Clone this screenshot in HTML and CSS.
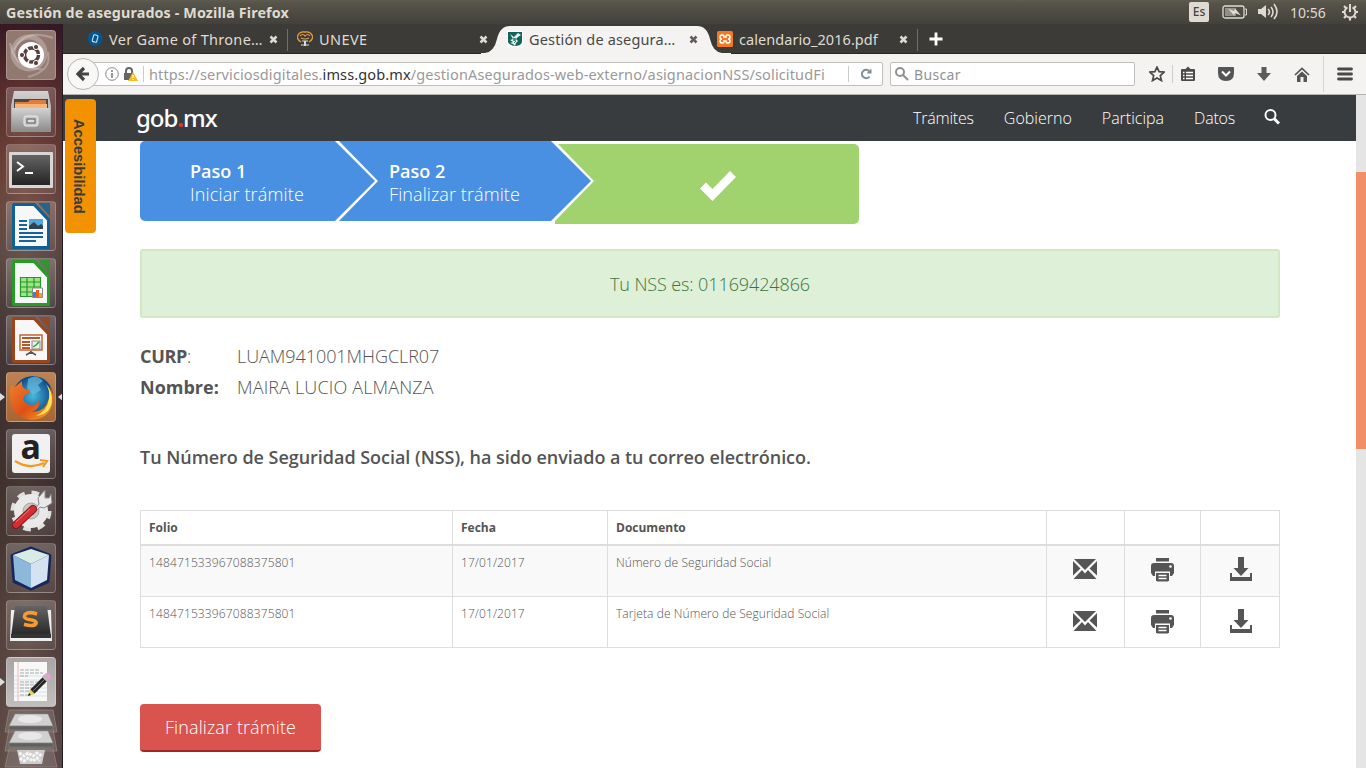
FILE: index.html
```html
<!DOCTYPE html>
<html lang="es">
<head>
<meta charset="utf-8">
<title>Gestión de asegurados</title>
<link rel="stylesheet" href="styles.css">
</head>
<body>
<svg class="defs" width="0" height="0">
  <defs>
    <symbol id="close" viewBox="0 0 9 9"><path d="M1.5 1.5l6 6M7.500 1.500l-6 6" stroke="currentColor" stroke-width="2.500"/></symbol>
    <symbol id="mail" viewBox="0 0 24 20"><g fill="#555"><path d="M1 0h22L12 11z"/><path d="M0 2l7.500 7.500L0 16.500zM24 2l-7.500 7.500 7.500 7zM9 11l3 3.500 3-3.500 8.500 9H.5z"/></g></symbol>
    <symbol id="print" viewBox="0 0 23 25"><path fill="#555" d="M5 1h13v3H5zM3 6h17q3 0 3 3v7l-2 3h-2v-4H4v4H2l-2-3V9q0-3 3-3zM5 16h13v8H5z"/><path fill="#aaa" d="M5 4h13v1H5zM4 14h15v1H4zM6 24h11v1H6z"/><circle cx="19.500" cy="9.500" r="1.300" fill="#fff"/><path d="M7.500 18.500h8M7.500 21.500h8" stroke="#fff" stroke-width="1.400"/></symbol>
    <symbol id="down" viewBox="0 0 22 24"><path fill="#555" d="M8 0h6v11h4.500L11 19 3.500 11H8zM0 16h2v4h18v-4h2v8H0z"/></symbol>
    <linearGradient id="steel" x2="0" y2="1"><stop stop-color="#d2d2d2"/><stop offset="1" stop-color="#8d8d8d"/></linearGradient>
    <linearGradient id="dark" x2="0" y2="1"><stop stop-color="#646464"/><stop offset="1" stop-color="#242424"/></linearGradient>
    <linearGradient id="fox" x2="1" y2="1"><stop stop-color="#ed8130"/><stop offset=".55" stop-color="#df5015"/><stop offset="1" stop-color="#f7a72d"/></linearGradient>
    <radialGradient id="globe"><stop stop-color="#48b9df"/><stop offset="1" stop-color="#0b4785"/></radialGradient>
    <symbol id="page" viewBox="0 0 50 50"><path d="M8 2h21l15 16v29q0 1-1 1H8q-2 0-2-2V4q0-2 2-2z" fill="currentColor"/><path d="M9 5h18.500L41 19.500V45H9z" fill="#f7f7f7"/><path d="M32 2h12v13z" fill="currentColor" opacity=".8"/></symbol>
  </defs>
</svg>

<header class="panel">
  <span class="panel-title">Gestión de asegurados - Mozilla Firefox</span>
  <span class="keyboard">Es</span>
  <svg class="battery" width="25" height="14" viewBox="0 0 25 14"><rect x="1" y="1" width="21" height="12" rx="2" fill="none" stroke="#dfdbd2" stroke-width="1.300"/><path d="M23 4h1.500v6H23" fill="none" stroke="#dfdbd2"/><rect x="3" y="3" width="11" height="8" fill="#918f88"/><path d="M6 3.500l6 2.500 1-2.500 6 7-6-2.500-1 2.500z" fill="#dfdbd2"/></svg>
  <svg class="volume" width="22" height="18" viewBox="0 0 22 18"><path d="M1 6h3l5-4v13l-5-4H1z" fill="#dfdbd2"/><path d="M11 6q3 3 0 6M14 4q4 5 0 10M17 1q6 8 0 15" fill="none" stroke="#dfdbd2" stroke-width="1.600"/></svg>
  <span class="clock">10:56</span>
  <svg class="session" width="18" height="18" viewBox="0 0 18 18" fill="none" stroke="#dfdbd2"><path d="M6.500 4.300a5.400 5.400 0 1 0 5 0" stroke-width="1.900"/><path d="M9 1v8" stroke-width="2"/><path d="M3 3l2 2M15 3l-2 2M1 9h2M15 9h2M3 15l2-2M15 15l-2-2M9 15v2.500" stroke-width="2.200"/></svg>
</header>

<div class="desktop">
  <nav class="launcher">
    <div class="tile dash"><svg viewBox="0 0 50 50"><g fill="none" stroke="#fff" stroke-opacity=".25"><circle cx="23" cy="23" r="16" stroke-width="5"/><path d="M8 20Q18-2 47 8M42 22q4 19-20 25M4 13q5 28 35 26" stroke-width="2"/></g><circle cx="25" cy="25" r="13" fill="#fff"/><circle cx="25.500" cy="25" r="7" fill="none" stroke="#56433f" stroke-width="3.500" stroke-dasharray="13.200 1.500"/><g fill="#56433f" stroke="#fff"><circle cx="16" cy="25" r="2.600"/><circle cx="30" cy="17" r="2.600"/><circle cx="30" cy="33" r="2.600"/></g></svg></div>
    <div class="tile"><svg viewBox="0 0 50 50"><path d="M8 4h34l3 15v26H5V19z" fill="url(#steel)"/><path d="M8 12h34v9H8z" fill="#4c4743"/><path d="M9 15h13l2-2h16v8H9z" fill="#e37b3b"/><path d="M9 17h32v5H9z" fill="#f7b57a"/><path d="M6 21h38v23H6z" fill="url(#steel)"/><rect x="18" y="29" width="14" height="10" rx="2" fill="#c8c8c8" stroke="#ededed"/><rect x="21" y="32" width="8" height="4" fill="#ddd" stroke="#555"/></svg></div>
    <div class="tile"><svg viewBox="0 0 50 50"><rect x="3" y="8" width="44" height="36" rx="1" fill="#d7d7d5"/><rect x="6" y="11" width="38" height="30" fill="url(#dark)"/><path d="M11 18l6 4.500-6 4.500M19 29h8" fill="none" stroke="#fff" stroke-width="2"/></svg></div>
    <div class="tile blue"><svg viewBox="0 0 50 50"><use href="#page"/><rect x="23" y="18" width="14" height="10" fill="#51a8db"/><path d="M23 28v-3l5-4 4 4 3-2 2 2v3z" fill="#30424b"/><path d="M13 20h8M13 24h8M13 28h8M13 32h24M13 36h24M13 40h17" stroke="#15649b" stroke-width="1.800"/></svg></div>
    <div class="tile green"><svg viewBox="0 0 50 50"><use href="#page"/><rect x="14" y="19" width="21" height="20" fill="#9ee685"/><path d="M14 19.500h21M14 24h21M14 29h21M14 34h21M14 38.500h21M14.500 19v20M21 19v20M28 19v20M34.500 19v20" stroke="#25972b" stroke-width="1.200"/><path d="M26.500 30h10v9.500h-10z" fill="#fff" stroke="#888"/><path d="M27 34h3v5h-3z" fill="#3885c3"/><path d="M30 32h3v7h-3z" fill="#eb5d23"/><path d="M33 35h3v4h-3z" fill="#e7a82b"/></svg></div>
    <div class="tile brown"><svg viewBox="0 0 50 50"><use href="#page"/><rect x="14" y="20" width="22" height="15" fill="#fff" stroke="#c56235" stroke-width="1.500"/><path d="M16 23h18M16 27h8M16 30h8M16 33h8" stroke="#b95527" stroke-width="2"/><rect x="26" y="26" width="8" height="8" fill="#eee" stroke="#888"/><path d="M27 32l3-2 3-3" stroke="#29a22a" fill="none" stroke-width="1.500"/><path d="M25 36v3M25 37l-5 3M25 37l5 3" stroke="#555" stroke-width="1.500"/></svg></div>
    <div class="tile running firefox"><svg viewBox="0 0 50 50"><circle cx="27" cy="24" r="20" fill="url(#globe)"/><path d="M22 7q8-6 15 2l-5 4 3 5-8 5-6-7z" fill="#69bee0" opacity=".7"/><path d="M5 13l4 2 7-6q-1 5 3 8l5 1q0 3-5 5l-2 4q2 6 9 6 6 0 7-5 2 8-7 12 12 0 16-11 4-6 2-15 4 8 3 14-2 19-22 20Q5 44 4 26q-1-7 1-13z" fill="url(#fox)"/><path d="M40 12q4 6 3 14-1 12-13 18Q47 42 46 25q-1-8-6-13z" fill="#ffe34b"/></svg></div>
    <div class="tile"><svg viewBox="0 0 50 50"><rect x="6" y="5" width="38" height="39" rx="3" fill="#f1f1f1"/><text x="14.500" y="30" class="amazon">a</text><path d="M9 32q14 9 29 2M34 31l7 1-4 6" fill="none" stroke="#f49a24" stroke-width="2.200"/></svg></div>
    <div class="tile"><svg viewBox="0 0 50 50"><circle cx="25" cy="25" r="17" fill="none" stroke="#e0e0e0" stroke-width="7" stroke-dasharray="7 6.350"/><circle cx="25" cy="25" r="12.500" fill="none" stroke="#e9e9e9" stroke-width="9"/><circle cx="25" cy="25" r="8" fill="#c6c6c6" stroke="#aaa"/><path d="M25 28L33 18l-1-6 7-8 0 8 4 0 2-4 1 9-8 5-4-1-7 8z" fill="#e9e9e9" stroke="#888"/><path d="M10 39L27 23" stroke="#8e171b" stroke-width="8" stroke-linecap="round"/><path d="M10 39L27 23" stroke="#d62d32" stroke-width="6" stroke-linecap="round"/><path d="M10 36L24 23" stroke="#ef7c78" stroke-width="1"/></svg></div>
    <div class="tile"><svg viewBox="0 0 50 50"><path d="M25 6l18 7-2 25-16 7L9 38 7 13z" fill="#1d2f62" stroke="#192859" stroke-width="5" stroke-linejoin="round"/><path d="M7 12l18-6 18 6-18 9z" fill="#d8ebe7"/><path d="M7 12l18 9v24L9 37z" fill="#8eb7dc"/><path d="M43 12l-18 9v24l16-8z" fill="#d5e2f1"/></svg></div>
    <div class="tile"><svg viewBox="0 0 50 50"><path d="M5 10h40l1 31H4z" fill="#eee"/><path d="M9 6h32l4 31H5z" fill="url(#dark)"/><path d="M5 34h40v4H5z" fill="#343434"/><path d="M31 14q-9-3-12 .5-2 4 4 5 8 1 7 4-2 3.500-12 .8" fill="none" stroke="#f69b30" stroke-width="3.600"/></svg></div>
    <div class="tile editor"><svg viewBox="0 0 50 50"><rect x="8" y="5" width="33" height="39" fill="#f8f8f7"/><path d="M8 19h33M8 23h33M8 27h33M8 31h33M8 35h33M8 39h33" stroke="#d9e2ec"/><path d="M14 13h19M14 16h23M14 19h8M14 25h23M14 28h21M14 31h19M14 34h18M14 38h9" stroke="#a8aaac" stroke-width="1" stroke-dasharray="4 1"/><path d="M12 5v39" stroke="#efb8b1"/><path d="M26 35L40 21" stroke="#272727" stroke-width="6"/><path d="M27 34L39 22" stroke="#7a7a7a" stroke-width="1"/><path d="M37 19l3-3q5 0 5 5l-3 3z" fill="#e5a0d1"/><path d="M36 20l2-2 5 5-2 2z" fill="#bbb"/><path d="M22 39l2-7 5 5z" fill="#e7d456"/><path d="M22 39l1-3 2 2z" fill="#222"/></svg></div>
    <svg class="disks" width="56" height="59" viewBox="0 0 56 59"><g fill="#aaa" fill-opacity=".25" stroke="#a69b98" stroke-opacity=".5"><path d="M6 1h44l4 22H2zM6 20h44l4 22H2zM6 40h44l4 18H2z"/></g><g stroke="#888" stroke-width=".5"><path d="M12 5h33l5 12H6zM12 22h33l5 12H6z" fill="#d1d1d1"/><path d="M6 17h44v4H6zM6 34h44v4H6z" fill="#606060"/></g><g fill="#e8e8e8"><ellipse cx="27" cy="10" rx="12" ry="4"/><ellipse cx="27" cy="27" rx="12" ry="4"/></g><path d="M14 41h28l-3 14H17z" fill="#ccc"/><path d="M16 44l5 3 4-3 5 3 4-3 5 3M17 49l4 3 4-3 5 3 4-3 3 3" fill="none" stroke="#f5f5f5" stroke-width="3" stroke-dasharray="3 1"/></svg>
  </nav>

  <section class="browser">
    <div class="tabs">
      <div class="tab"><svg width="16" height="16" viewBox="0 0 16 16"><circle cx="8" cy="7.500" r="7.500" fill="#08558b"/><path d="M6 13l2 3 2-3" fill="#08558b"/><rect x="6" y="4" width="4.500" height="7" rx="1" transform="rotate(15 8 7)" fill="none" stroke="#cce5f2" stroke-width="1.100"/></svg><span class="label t1">Ver Game of Throne…</span><svg class="x" width="9" height="9"><use href="#close"/></svg></div>
      <div class="tab split"><svg width="16" height="16" viewBox="0 0 16 16"><path d="M4 11Q-1 8 1 4q2-4 7-3 5-1 7 3 2 4-3 7" fill="none" stroke="#e59a38" stroke-width="1.300"/><path d="M3 5q3-3 5 0 3-3 5 0M4 7q4 2 8 0" fill="none" stroke="#dba45d" stroke-width="1.200"/><path d="M5 9h6v2H5zM4 13h8v2H4z" fill="#8b8b88"/><path d="M7 10h2v5H7z" fill="#ddd"/></svg><span class="label t2">UNEVE</span><svg class="x" width="9" height="9"><use href="#close"/></svg></div>
      <div class="tab active"><svg class="tab-shape" width="250" height="30" viewBox="0 0 250 30"><path d="M0 29h4q9-1 12-14Q19 2 29 2H216q10 0 13 13 3 13 12 14h9v1H0z" fill="#f4f3f2"/></svg><svg width="16" height="16" viewBox="0 0 16 16"><rect width="16" height="16" rx="1" fill="#fff"/><path d="M1 1h14v10q-1 4-7 4-6-1-7-4z" fill="#12645a"/><path d="M3 3l4 3 4-4 3 2-3 2-2 2 2 2-2 2-1 3-2-2-3-1 3-1-3-2 3-1z" fill="#e7f1ed"/><path d="M6 7l3 1-3 1 3 1-2 2" fill="none" stroke="#12645a" stroke-width=".8"/></svg><span class="label t3">Gestión de asegura…</span><svg class="x" width="9" height="9"><use href="#close"/></svg></div>
      <div class="tab"><svg class="xampp" width="16" height="16" viewBox="0 0 16 16"><rect width="16" height="16" rx="1.500" fill="#f47920"/><path d="M5 4h1q1 0 1 2h2q0-2 1-2h1q2 0 2 2t-2 2q2 0 2 2t-2 2h-1q-1 0-1-2H7q0 2-1 2H5q-2 0-2-2t2-2q-2 0-2-2t2-2z" fill="none" stroke="#fff" stroke-width="1.500"/></svg><span class="label t4">calendario_2016.pdf</span><svg class="x" width="9" height="9"><use href="#close"/></svg></div>
      <div class="new-tab"><svg width="14" height="14" viewBox="0 0 14 14"><path d="M7 .5v13M.5 7h13" stroke="#fff" stroke-width="2.800"/></svg></div>
    </div>

    <div class="toolbar">
      <div class="back"><svg width="16" height="16" viewBox="0 0 16 16"><path d="M9 2L3 8l6 6M3.500 8H14" fill="none" stroke="#444" stroke-width="3.200"/></svg></div>
      <div class="url">
        <svg width="14" height="14" viewBox="0 0 14 14"><circle cx="7" cy="7" r="6.300" fill="none" stroke="#888"/><path d="M7 3v2M7 6v5" stroke="#777" stroke-width="1.500"/></svg>
        <svg class="lock" width="15" height="15" viewBox="0 0 15 15"><path d="M3 7V4q0-3 3-3t3 3v3" fill="none" stroke="#666" stroke-width="2"/><path d="M1 6h9v7H1z" fill="#666"/><path d="M10 5l5 9H5z" fill="#f8b91b"/><path d="M10 8v3M10 12v1" stroke="#fff" stroke-width="1.300"/></svg>
        <span class="address">https://serviciosdigitales.<b>imss.gob.mx</b>/gestionAsegurados-web-externo/asignacionNSS/solicitudFi</span>
        <span class="reload"><svg width="12" height="12" viewBox="0 0 12 12"><path d="M9.500 8.500a4.200 4.200 0 1 1 0-5" fill="none" stroke="#80909b" stroke-width="2"/><path d="M11.500.5v5h-5z" fill="#80909b"/></svg></span>
      </div>
      <div class="search"><svg width="14" height="14" viewBox="0 0 14 14" fill="none" stroke="#909090" stroke-width="2"><circle cx="5" cy="5" r="4"/><path d="M8 8l5 5"/></svg><span>Buscar</span></div>
      <div class="tool star"><svg width="16" height="16" viewBox="0 0 16 16"><path d="M8 1l2.100 4.600 5 .5-3.800 3.500 1.200 5L8 12l-4.500 2.600 1.200-5L.9 6.100l5-.5z" fill="none" stroke="#4b4b4b" stroke-width="1.700"/></svg></div>
      <div class="tool"><svg width="14" height="16" viewBox="0 0 14 16"><path d="M1 3h3.500L7 .5 9.500 3H13q1 0 1 1v10q0 1-1 1H1q-1 0-1-1V4q0-1 1-1z" fill="#4b4b4b"/><path d="M2 6.500h1.500M5 6.500h7M2 9.500h1.500M5 9.500h7M2 12.500h1.500M5 12.500h7" stroke="#fff" stroke-width="1.700"/></svg></div>
      <div class="tool"><svg width="16" height="14" viewBox="0 0 16 14"><path d="M1 0h14q1 0 1 1v5q0 8-8 8T0 6V1q0-1 1-1z" fill="#555"/><path d="M4 4.500l4 4 4-4" fill="none" stroke="#fff" stroke-width="2"/></svg></div>
      <div class="tool"><svg width="14" height="14" viewBox="0 0 14 14"><path d="M4.500 0h5v6H14l-7 8-7-8h4.500z" fill="#5b5b5b"/></svg></div>
      <div class="tool"><svg width="16" height="15" viewBox="0 0 16 15"><path d="M1 8l7-6.500L15 8" fill="none" stroke="#555" stroke-width="1.700"/><path d="M3 9l5-4.500L13 9v6H9.500v-5h-3v5H3z" fill="#555"/></svg></div>
      <div class="menu"><svg width="16" height="14" viewBox="0 0 16 14"><path d="M1.500 2h13M1.500 7h13M1.500 12h13" stroke="#494949" stroke-width="2.800" stroke-linecap="round"/></svg></div>
    </div>

    <div class="viewport">
      <div class="accessibility"><span>Accesibilidad</span></div>
      <div class="page">
        <header class="site-header">
          <div class="logo">gob<i>.</i>mx</div>
          <nav><a class="n1">Trámites</a><a>Gobierno</a><a>Participa</a><a class="n4">Datos</a></nav>
          <svg width="16" height="16" viewBox="0 0 16 16" fill="none" stroke="#fff"><circle cx="6.500" cy="6" r="5" stroke-width="2"/><path d="M10 9.500l5 5" stroke-width="3"/></svg>
        </header>
        <main>
          <div class="steps">
            <div class="step first"><strong>Paso 1</strong><span>Iniciar trámite</span></div>
            <div class="step second"><strong>Paso 2</strong><span>Finalizar trámite</span></div>
            <div class="step done"><svg width="36" height="30" viewBox="0 0 36 30"><path d="M0 17.500l6-6 6.500 6.500L30 0l6 6-23.500 24z" fill="#fff"/></svg></div>
          </div>
          <div class="alert"><span>Tu NSS es: 01169424866</span></div>
          <dl>
            <dt><b class="key-curp">CURP</b>:</dt><dd class="curp">LUAM941001MHGCLR07</dd>
            <dt><b>Nombre:</b></dt><dd class="name">MAIRA LUCIO ALMANZA</dd>
          </dl>
          <p class="sent"><span>Tu Número de Seguridad Social (NSS), ha sido enviado a tu correo electrónico.</span></p>
          <table>
            <colgroup><col class="c1"><col class="c2"><col class="c3"><col class="c4"><col class="c5"><col class="c6"></colgroup>
            <thead><tr><th>Folio</th><th>Fecha</th><th>Documento</th><th></th><th></th><th></th></tr></thead>
            <tbody>
              <tr><td class="folio">148471533967088375801</td><td>17/01/2017</td><td>Número de Seguridad Social</td><td class="act mail"><svg width="24" height="20"><use href="#mail"/></svg></td><td class="act"><svg width="23" height="25"><use href="#print"/></svg></td><td class="act save"><svg width="22" height="24"><use href="#down"/></svg></td></tr>
              <tr><td class="folio">148471533967088375801</td><td>17/01/2017</td><td>Tarjeta de Número de Seguridad Social</td><td class="act mail"><svg width="24" height="20"><use href="#mail"/></svg></td><td class="act"><svg width="23" height="25"><use href="#print"/></svg></td><td class="act save"><svg width="22" height="24"><use href="#down"/></svg></td></tr>
            </tbody>
          </table>
          <button>Finalizar trámite</button>
        </main>
      </div>
      <div class="scrollbar"><div class="thumb"></div></div>
    </div>
  </section>
</div>
</body>
</html>
```

FILE: styles.css
```css
* { box-sizing: border-box; }
body { margin: 0; width: 1366px; height: 768px; overflow: hidden; display: flex; flex-direction: column; background: #fff; font-family: "Open Sans", "Noto Sans", sans-serif; }
svg { display: block; flex: none; }
.defs { position: absolute; }

.panel { height: 24px; flex: none; display: flex; align-items: center; padding: 0 7px 0 6px; color: #dfdbd2; background: linear-gradient(#5e5b50, #565349 15%, #42413b); font-family: "Noto Sans", sans-serif; font-size: 14px; white-space: nowrap; }
.panel-title { flex: 1; font-weight: 700; font-size: 14.3px; letter-spacing: .13px; }
.keyboard { width: 20px; height: 20px; border-radius: 2px; background: #dfdbd2; color: #444; font-size: 12px; font-weight: 500; line-height: 20px; text-align: center; }
.battery { margin-left: 13px; }
.volume { margin-left: 10px; }
.clock { margin-left: 11px; width: 37px; font-size: 14px; letter-spacing: 0; }
.session { margin-left: 14px; }

.desktop { flex: 1; min-height: 0; display: flex; }
.launcher { width: 63px; flex: none; padding: 6px 0 0 6px; display: flex; flex-direction: column; gap: 7px; overflow: hidden; border-right: 1px solid #241b23; background: linear-gradient(90deg, rgba(40,15,10,.15), transparent 40%, rgba(30,10,25,.2)), linear-gradient(#381a27, #5c3031 8%, #74463b 18%, #74534a 25%, #67544e 31%, #514442 38%, #433839 48%, #443633 60%, #4c3d39 70%, #5c4943 80%, #69575100 100%), #695751; }
.tile { position: relative; width: 50px; height: 50px; flex: none; border: 1px solid rgba(255,255,255,.22); border-radius: 4px; background: linear-gradient(rgba(255,255,255,.22), rgba(255,255,255,.06)); }
.tile svg { width: 50px; height: 50px; margin: -1px; overflow: visible; }
.dash { background: #927970; }
.firefox { background: linear-gradient(#bd8356, #a66634); }
.editor { background: linear-gradient(#aaa5a5, #c1bebe); }
.blue { color: #0d6195; }
.green { color: #249c26; }
.brown { color: #9b451c; }
.running::before, .editor::before, .running::after { content: ""; position: absolute; top: 20px; left: -7px; border: 4px solid transparent; border-left: 5px solid #ddd; border-right: 0; }
.running::after { left: 51px; border-left: 0; border-right: 5px solid #ddd; }
.amazon { font: 700 34px "Noto Sans", sans-serif; fill: #222; }
.disks { margin: -5px 0 0 -3px; }

.browser { flex: 1; min-width: 0; display: flex; flex-direction: column; }
.tabs { height: 30px; flex: none; display: flex; padding-left: 15px; background: #3c3b37; border-bottom: 1px solid #292824; color: #dfdbd2; font-family: "Noto Sans", sans-serif; font-size: 14.5px; }
.tab { position: relative; width: 210px; height: 30px; display: flex; align-items: center; padding: 0 10px 0 9px; white-space: nowrap; }
.tab.split::before, .new-tab::before { content: ""; position: absolute; left: -1px; top: 5px; height: 22px; border-left: 1px solid #706f6b; }
.label { flex: 1; min-width: 0; margin-left: 6px; line-height: 20px; }
.t1 { letter-spacing: .3px; }
.t2 { letter-spacing: .4px; }
.t3 { letter-spacing: .15px; }
.t4 { letter-spacing: .05px; }
.x { color: #dedbd5; }
.active { color: #494843; z-index: 1; }
.active > * { position: relative; }
.active .tab-shape { position: absolute; left: -17px; top: 0; }
.active .x { color: #5f5e5a; }
.xampp { position: relative; z-index: 2; }
.new-tab { position: relative; width: 38px; height: 30px; display: flex; align-items: center; padding-left: 11px; }

.toolbar { height: 41px; flex: none; display: flex; align-items: center; background: #f4f3f2; border-bottom: 1px solid #b5b4b0; font-family: "Noto Sans", sans-serif; font-size: 14px; }
.back { position: relative; z-index: 1; width: 32px; height: 32px; margin-left: 4px; border: 1px solid #b7b6b2; border-radius: 50%; background: #f8f8f7; display: grid; place-items: center; flex: none; }
.url { width: 791px; height: 24px; margin-left: -7px; flex: none; display: flex; align-items: center; padding-left: 12px; background: #fff; border: 1px solid #bfbeba; border-radius: 2px; }
.lock { margin-left: 4px; }
.address { width: 686px; margin-left: 5px; padding: 1px 0 0 6px; height: 22px; line-height: 21px; background: linear-gradient(#ccc, #ccc) 0 3px / 1px 16px no-repeat; color: #999; white-space: nowrap; font-size: 14.5px; letter-spacing: .13px; }
.address b { color: #333; font-weight: 400; }
.reload { margin-left: 19px; padding-left: 11px; height: 16px; border-left: 1px solid #ccc; display: flex; align-items: center; }
.search { width: 245px; height: 24px; margin-left: 7px; flex: none; display: flex; align-items: center; gap: 5px; padding-left: 4px; background: #fff; border: 1px solid #bfbeba; border-radius: 2px; color: #929292; letter-spacing: .35px; }
.tool { width: 38px; height: 18px; display: grid; place-items: center; flex: none; }
.star { width: 34px; margin-left: 4px; padding-left: 3px; border-right: 1px solid #ccc; margin-right: -4px; }
.menu { width: 43px; height: 36px; margin-left: 2px; border-left: 1px solid #d5d4d2; display: grid; place-items: center; }

.viewport { position: relative; flex: 1; min-height: 0; display: flex; }
.page { flex: 1; min-width: 0; }
.scrollbar { width: 10px; padding-top: 77px; background: #e5e5e5; }
.thumb { height: 277px; background: #f08f68; }
.accessibility { position: absolute; z-index: 2; left: 2px; top: 4px; width: 31px; height: 134px; border-radius: 4px; background: #f39200; display: grid; place-items: center; }
.accessibility span { writing-mode: vertical-rl; font: 700 14.7px/18px "Liberation Sans", sans-serif; color: #393c3e; margin-right: 3px; }
.site-header { height: 46px; display: flex; align-items: center; padding: 0 76px 0 74px; background: #393c3e; color: #fff; }
.logo { flex: 1; font: 500 24px/30px "Noto Sans", sans-serif; letter-spacing: -1.05px; margin-left: -1px; }
.logo i { color: #e0352f; font-style: normal; font-weight: 700; }
.site-header nav { display: flex; gap: 30px; font-size: 16px; font-weight: 300; line-height: 22px; }
.n1, .n4 { letter-spacing: -.2px; }
.site-header > svg { margin: -2px 0 0 29px; }

main { padding-left: 77px; color: #545454; font-size: 18px; font-weight: 300; }
.steps { display: flex; height: 83px; color: #fff; }
.step { height: 80px; flex: none; background: #4a90e2; display: flex; flex-direction: column; line-height: 23px; padding-top: 19px; }
.step strong { font-weight: 600; }
.first span { letter-spacing: .17px; }
.second span { letter-spacing: .09px; }
.first { width: 235px; padding-left: 50px; border-radius: 5px 0 0 5px; clip-path: polygon(0 0, 195px 0, 235px 40px, 195px 80px, 0 80px); }
.second { width: 252px; margin-left: -36px; padding-left: 50px; clip-path: polygon(0 0, 212px 0, 252px 40px, 212px 80px, 0 80px, 39px 40px); }
.done { width: 304px; margin: 3px 0 0 -36px; padding: 4px 0 0 22px; align-items: center; justify-content: center; border-radius: 0 5px 5px 0; background: #a0d26e; clip-path: polygon(3px 0, 100% 0, 100% 100%, 0 100%, 0 77px, 39px 37px); }
.alert { width: 1140px; height: 69px; margin-top: 25px; border: 2px solid #d1e8c4; border-radius: 3px; background: #dff0d8; color: #3c763d; text-align: center; line-height: 67px; letter-spacing: -.1px; }
dl { width: 700px; margin: 23px 0 0; display: grid; grid-template-columns: 97px 1fr; line-height: 31px; }
dd { margin: 0; }
dt b { font-weight: 700; }
.key-curp { letter-spacing: -.3px; }
.curp { letter-spacing: -.06px; }
.name { letter-spacing: .15px; }
.sent { margin: 38px 0 0; line-height: 32px; font-weight: 600; letter-spacing: -.035px; }
table { width: 1139px; margin: 37px 0 0; table-layout: fixed; border-collapse: collapse; font-size: 12px; line-height: 17px; }
.c1 { width: 312px; }
.c2 { width: 155px; }
.c3 { width: 439px; }
.c4 { width: 78px; }
.c5 { width: 76px; }
.c6 { width: 79px; }
th, td { border: 1px solid #ddd; padding: 8px; text-align: left; vertical-align: top; }
th { height: 34px; font-weight: 700; border-bottom-width: 2px; }
td { height: 51px; letter-spacing: .08px; }
.folio { letter-spacing: .13px; }
tbody tr:first-child { background: #f9f9f9; }
td.act { padding: 0 0 3px; vertical-align: middle; }
tr:last-child td.act { padding-bottom: 1px; }
td.mail { padding-right: 2px; }
td.save { padding-left: 2px; }
.act svg { margin: 0 auto; }
button { display: block; width: 181px; height: 48px; margin: 56px 0 0; padding: 0; border: 0; border-bottom: 2px solid #9f2723; border-radius: 4px; background: #d9534f; color: #fff; font: 300 18px "Open Sans", sans-serif; letter-spacing: .1px; }
```
